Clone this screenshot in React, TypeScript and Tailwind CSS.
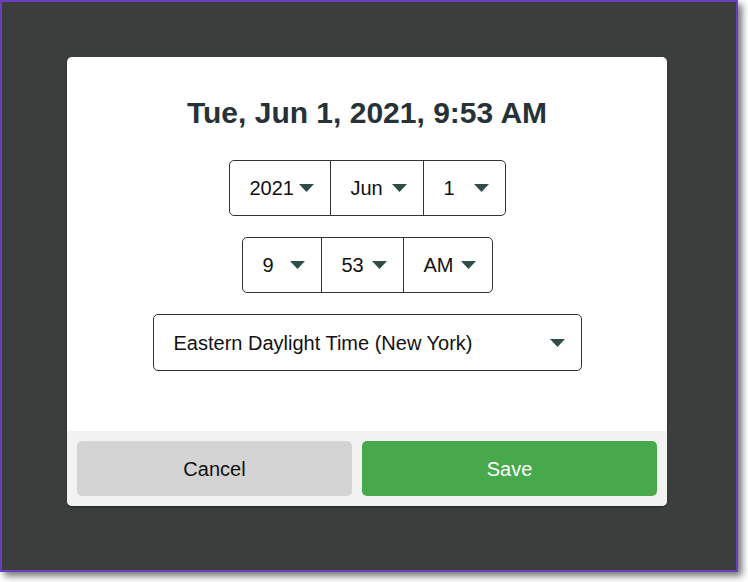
import React from "react";

const Caret = () => (
  <svg width="15" height="8" viewBox="0 0 15 8" className="shrink-0">
    <polygon points="0,0 15,0 7.5,8" fill="#2e4d49" />
  </svg>
);

type Seg = { value: string; width: string };

const dateSegs: Seg[] = [
  { value: "2021", width: "w-[100px]" },
  { value: "Jun", width: "w-[93px]" },
  { value: "1", width: "w-[82px]" },
];

const timeSegs: Seg[] = [
  { value: "9", width: "w-[78px]" },
  { value: "53", width: "w-[82px]" },
  { value: "AM", width: "w-[89px]" },
];

function SelectGroup({ segs }: { segs: Seg[] }) {
  return (
    <div className="flex h-[56px] rounded-[5px] border border-[#333] bg-white">
      {segs.map((s, i) => (
        <div
          key={s.value}
          className={`${s.width} flex items-center justify-between pl-5 pr-4 text-[20px] text-[#111] ${
            i > 0 ? "border-l border-[#333]" : ""
          }`}
        >
          <span>{s.value}</span>
          <Caret />
        </div>
      ))}
    </div>
  );
}

export default function App() {
  return (
    <div className="min-h-screen bg-white" style={{ fontFamily: '"Liberation Sans", Arial, sans-serif' }}>
      <div className="w-[738px] h-[572px] border-2 border-[#6a3fbd] bg-[#3c3e3d] shadow-[4px_4px_7px_rgba(0,0,0,0.55)] pl-[65px] pt-[55px]">
        <div className="w-[600px] rounded-[5px] bg-white overflow-hidden shadow-[0_1px_2px_rgba(0,0,0,0.4)]">
          <div className="flex flex-col items-center pt-[38px] pb-[60px]">
            <h1 className="h-[36px] leading-[36px] text-[30px] font-bold text-[#263238]">
              Tue, Jun 1, 2021, 9:53 AM
            </h1>
            <div className="mt-[29px]">
              <SelectGroup segs={dateSegs} />
            </div>
            <div className="mt-[21px]">
              <SelectGroup segs={timeSegs} />
            </div>
            <div className="mt-[21px] w-[429px] h-[57px] rounded-[5px] border border-[#333] flex items-center justify-between pl-5 pr-4 text-[20px] text-[#111]">
              <span>Eastern Daylight Time (New York)</span>
              <Caret />
            </div>
          </div>
          <div className="flex gap-[10px] bg-[#f2f2f2] p-[10px]">
            <button className="w-[275px] h-[55px] rounded-[5px] bg-[#d4d4d4] flex items-center justify-center text-[20px] text-[#111]">
              Cancel
            </button>
            <button className="flex-1 h-[55px] rounded-[5px] bg-[#48a84c] flex items-center justify-center text-[20px] text-white">
              Save
            </button>
          </div>
        </div>
      </div>
    </div>
  );
}
